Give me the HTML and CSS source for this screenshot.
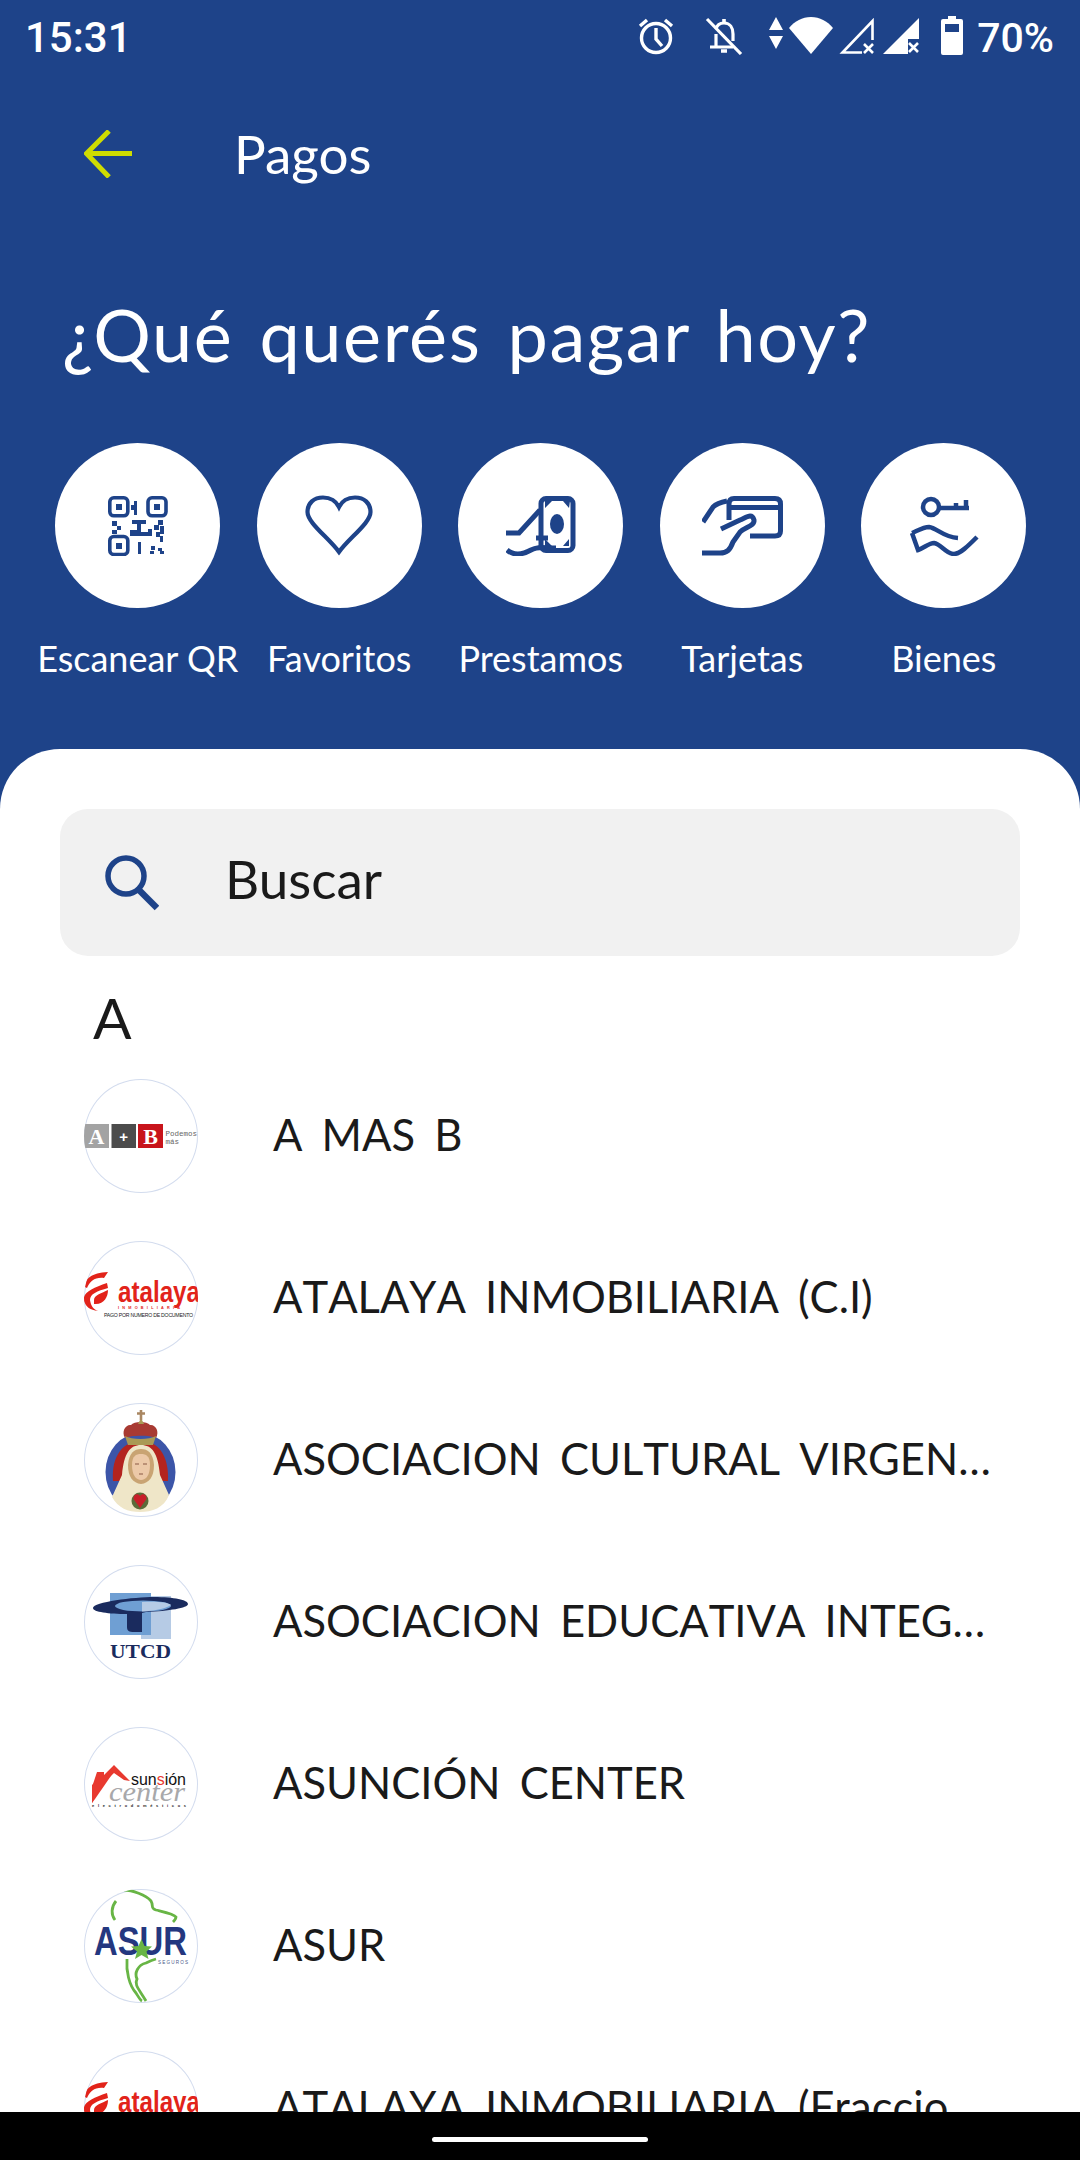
FILE: index.html
```html
<!DOCTYPE html>
<html lang="es">
<head>
<meta charset="utf-8">
<title>Pagos</title>
<link rel="stylesheet" href="styles.css">
</head>
<body>
<div class="screen">
  <main class="app">
    <section class="hero">
      <div class="status">
        <span class="clock">15:31</span>
        <div class="status-icons">
          <svg class="si" width="38" height="38" viewBox="0 0 38 38" fill="none" stroke="#fff" stroke-width="3.4"><circle cx="19" cy="21" r="14.5"/><path d="M19 11v11l6 7M3 9 10 3M35 9 28 3"/></svg>
          <svg class="si bell" width="38" height="38" viewBox="0 0 38 38" fill="none" stroke="#fff" stroke-width="3.2"><path d="M11 29V17M11 12c1-4 4-6 8-6 6 0 9 5 9 11v7M5 30h23"/><path d="M16 34h6M19 2v4" stroke-width="3.6"/><path d="M2 2 36 37"/></svg>
          <svg class="si arrows" width="14" height="32" viewBox="0 0 14 32" fill="#fff"><path d="M7 0 14 13H0zM7 32 0 19h14z"/></svg>
          <svg class="si wifi" width="46" height="37" viewBox="0 0 46 37" fill="#fff"><path d="M23 37 1 11C7 4 14 0 23 0s16 4 22 11z"/></svg>
          <svg class="si sig1" width="38" height="38" viewBox="0 0 38 38" fill="none" stroke="#fff" stroke-width="2.600"><path d="M24 35.500H4.500L34.500 4V23"/><path d="M26 27l9 9M35 27l-9 9"/></svg>
          <svg class="si sig2" width="38" height="38" viewBox="0 0 38 38"><path d="M37 1V22H26V37H1z" fill="#fff"/><path d="M27 26l9 9M36 26l-9 9" stroke="#fff" stroke-width="2.600"/></svg>
          <svg class="si batt" width="22" height="39" viewBox="0 0 22 39"><path d="M7 0h8v3h5q2 0 2 2v32q0 2-2 2H2q-2 0-2-2V5q0-2 2-2h5z" fill="#fff"/><rect x="4" y="8" width="14" height="8" fill="#1e4389"/></svg>
          <span class="pct">70%</span>
        </div>
      </div>
      <header class="toolbar">
        <svg class="back" width="48" height="48" viewBox="0 0 48 48" fill="none" stroke="#cfdc00" stroke-width="5"><path d="M48 23.500H4M25 1 2.500 23.500 25 47"/></svg>
        <h1 class="page-name">Pagos</h1>
      </header>
      <h2 class="question">¿Qué querés pagar hoy?</h2>
      <nav class="quick">
        <a class="quick-item">
          <span class="disc">
            <svg width="60" height="60" viewBox="0 0 60 60" fill="none" stroke="#1e4389" stroke-width="3.600">
              <rect x="1.800" y="1.800" width="18" height="18" rx="4"/><rect x="40" y="1.800" width="18" height="18" rx="4"/><rect x="1.800" y="40.500" width="18" height="18" rx="4"/>
              <g fill="#1e4389" stroke="none"><rect x="8" y="8" width="6" height="6"/><rect x="46" y="8" width="6" height="6"/><rect x="8" y="47" width="6" height="6"/>
              <path d="M26 5h3v14h-3zM23 9h3v5h-3zM4 25h5v5H4zM9 30h4v4H9zM4 34h5v4H4zM24 24h14v4h-5v8h7v-3h4v7H22v-6h7v-6h-5zM50 24h5v5h-5zM46 29h5v5h-5zM52 30h4v8h-4zM48 36h4v5h-4zM52 40h3v6h-3zM30 46h3v12h-3zM43 50h4v4h-4zM50 52h4v3h-4zM42 55h4v3h-4zM52 55h4v3h-4z"/></g>
            </svg>
          </span>
          <span class="quick-label">Escanear QR</span>
        </a>
        <a class="quick-item">
          <span class="disc">
            <svg width="68" height="61" viewBox="0 0 68 61" fill="none" stroke="#1e4389" stroke-width="4.200"><path d="M34 57 C24 43 2.500 28 2.500 17 C2.500 8 9 2.500 18 2.500 C25 2.500 31 6 34 12 C37 6 43 2.500 50 2.500 C59 2.500 65.500 8 65.500 17 C65.500 28 44 43 34 57Z"/></svg>
          </span>
          <span class="quick-label">Favoritos</span>
        </a>
        <a class="quick-item">
          <span class="disc">
            <svg class="money" width="70" height="60" viewBox="0 0 70 60" fill="none" stroke="#1e4389" stroke-width="5">
              <path d="M0 37H13L34 14"/><path d="M1 54C8 60 16 59 25 54C32 50 38 52 50 52"/><path d="M30 42H42"/>
              <rect x="35" y="2.500" width="32" height="52" rx="5"/>
              <ellipse cx="51" cy="28" rx="7" ry="10" fill="#1e4389" stroke="none"/>
              <path d="M39 5h7l-7 7zM64 5l-1 7-6-7zM39 50v-7l7 7zM63 50h-6l6-7z" fill="#1e4389" stroke="none"/>
            </svg>
          </span>
          <span class="quick-label">Prestamos</span>
        </a>
        <a class="quick-item">
          <span class="disc">
            <svg class="card" width="81" height="60" viewBox="0 0 81 60" fill="none" stroke="#1e4389" stroke-width="5">
              <path d="M27 24V8q0-5.500 5-5.500H73q5.500 0 5.500 5.500V35q0 5-5.500 5H48"/><path d="M27 11.500H78" stroke-width="5"/>
              <path d="M1 26 L11 11Q15 7 25 5"/><path d="M0 57H18C25 57 28 54 31 46L38 36C43 31 53 30 52 24C50 17 45 21 38 24L19 33"/>
            </svg>
          </span>
          <span class="quick-label">Tarjetas</span>
        </a>
        <a class="quick-item">
          <span class="disc">
            <svg class="keyhand" width="70" height="60" viewBox="0 0 70 60" fill="none" stroke="#1e4389" stroke-width="4.500">
              <ellipse cx="22" cy="11" rx="8" ry="8"/><path d="M30 12H60M57 4v8M47 7v5" />
              <path d="M3 37C8 35 14 31 20 31C28 32 34 41 49 42"/><path d="M3 37L9 54C15 52 20 47 25 47C32 48 37 58 45 58C51 58 59 50 68 41"/>
            </svg>
          </span>
          <span class="quick-label">Bienes</span>
        </a>
      </nav>
    </section>

    <section class="sheet">
      <div class="search">
        <svg class="search-icon" width="54" height="56" viewBox="0 0 54 56" fill="none" stroke="#1e4389" stroke-width="5.500"><circle cx="21" cy="21" r="18"/><path d="M33 34 52 53" stroke-width="6.500"/></svg>
        <span class="search-text">Buscar</span>
      </div>
      <h3 class="letter">A</h3>
      <ul class="list">
        <li class="row">
          <span class="logo">
            <svg viewBox="0 0 114 114" width="114" height="114">
              <rect x="0" y="45" width="25" height="24" fill="#a3a3a3"/><rect x="27.500" y="45" width="24.500" height="24" fill="#4c4c4c"/><rect x="54" y="45" width="25" height="24" fill="#c8141b"/>
              <text x="12.500" y="65" class="t-serif" font-size="22" fill="#fff" text-anchor="middle">A</text>
              <text x="39.700" y="63" class="t-sans-b" font-size="15" fill="#fff" text-anchor="middle">+</text>
              <text x="66.500" y="65" class="t-serif" font-size="22" fill="#fff" text-anchor="middle">B</text>
              <text x="81.500" y="57" class="t-mono" font-size="7.500" fill="#666">Podemos</text>
              <text x="81.500" y="65" class="t-mono" font-size="7.500" fill="#666">más</text>
            </svg>
          </span>
          <span class="name">A MAS B</span>
        </li>
        <li class="row">
          <span class="logo">
            <svg viewBox="0 0 114 114" width="114" height="114">
              <use href="#atalaya"/>
            </svg>
          </span>
          <span class="name">ATALAYA INMOBILIARIA (C.I)</span>
        </li>
        <li class="row">
          <span class="logo">
            <svg viewBox="0 0 114 114" width="114" height="114">
              <ellipse cx="56.500" cy="69" rx="35" ry="39" fill="#3c55a8"/>
              <path d="M29 78C27 52 40 38 57 38S85 52 84 78z" fill="#b3241f"/>
              <path d="M28 94C34 105 44 109 56 109S80 105 85 92L76 72C74 50 68 42 57 42S40 50 38 72z" fill="#efe6c8"/>
              <path d="M44 62C45 50 50 46 57 46S69 50 70 62C70 74 65 80 57 81C49 80 44 74 44 62z" fill="#c9a473"/>
              <path d="M48 62C48 53 52 51 57 51S66 53 66 62C66 72 62 77 57 77S48 72 48 62z" fill="#ecc9a8"/>
              <path d="M51 61h4M59 61h4M55 71h4" stroke="#8a5a45" stroke-width="1.200"/>
              <circle cx="56" cy="98" r="8.500" fill="#5c6b3a"/><path d="M56 105 49.500 96C49 91 54 90 56 93 58 90 63 91 62.500 96z" fill="#c81f2a"/>
              <path d="M41 35C37 28 42 21 47 22C50 18 63 18 66 22C71 21 76 28 72 35C66 32 47 32 41 35z" fill="#a83a32"/>
              <path d="M41 33C48 37 65 37 72 33L69 42H44z" fill="#a99a55"/>
              <path d="M54 21 57 15 60 21z" fill="#a99a55"/>
              <path d="M57 7V17M53 10.500H61" stroke="#a98762" stroke-width="2.600"/>
            </svg>
          </span>
          <span class="name">ASOCIACION CULTURAL VIRGEN…</span>
        </li>
        <li class="row">
          <span class="logo">
            <svg viewBox="0 0 114 114" width="114" height="114">
              <rect x="57" y="31" width="30" height="43" fill="#b6cbe5"/>
              <rect x="26" y="28" width="41" height="42" fill="#6f9fd3"/>
              <path d="M9 43C9 37 50 32 70 32C90 32 104 35 104 39C104 43 85 46 62 47L58 48V67H50C45 67 43 66 43 62V49C25 49 9 47 9 43z" fill="#1a2b5e"/>
              <ellipse cx="59" cy="41" rx="28" ry="5.500" fill="#6f9fd3"/>
              <path d="M58 46.500C70 46 80 44 87 40C85 37 70 36 58 37z" fill="#b6cbe5"/>
              <text x="56.500" y="93" class="t-serif-b" font-size="19" fill="#1a2b5e" text-anchor="middle" textLength="61" lengthAdjust="spacingAndGlyphs">UTCD</text>
            </svg>
          </span>
          <span class="name">ASOCIACION EDUCATIVA INTEG…</span>
        </li>
        <li class="row">
          <span class="logo">
            <svg viewBox="0 0 114 114" width="114" height="114">
              <path d="M8 76 8 60 13 45H20V48L30 38 46 54 40 53 30 46 17 58z" fill="#e8392f"/>
              <path d="M8 76V58L17 50 29 46 11 72z" fill="#e8392f"/>
              <text x="47" y="58" class="t-sans" font-size="16" fill="#111" textLength="55" lengthAdjust="spacingAndGlyphs">sun<tspan fill="#e8392f">s</tspan>ión</text>
              <text x="25" y="74" class="t-serif-i" font-size="27" fill="#a8a8aa" textLength="76" lengthAdjust="spacingAndGlyphs">center</text>
              <text x="8" y="80" class="t-sans-b" font-size="4" fill="#222" textLength="94">electrodomésticos</text>
            </svg>
          </span>
          <span class="name">ASUNCIÓN CENTER</span>
        </li>
        <li class="row">
          <span class="logo">
            <svg viewBox="0 0 114 114" width="114" height="114">
              <g fill="none" stroke="#68b545" stroke-width="2.800">
                <path d="M40 1C48 1 62 6 67 12C70 17 66 19 72 21C80 23 90 25 92 28C92 30 90 32 89 33"/>
                <path d="M32 12C27 18 27 26 31 31"/>
                <path d="M43 70C42 82 45 96 52 104C54 107 56 111 58 112"/>
                <path d="M62 112C55 100 50 96 53 90C50 84 54 76 62 74C66 72 68 71 72 70"/>
              </g>
              <text x="56.500" y="66" class="t-sans-b" font-size="40" fill="#24377f" text-anchor="middle" textLength="93" lengthAdjust="spacingAndGlyphs">ASUR</text>
              <path d="M57.500 50 60.500 57 68 57.500 62.500 62.500 64.500 70 57.500 66 51 70 53 62.500 47 57.500 54.500 57z" fill="#68b545"/>
              <text x="74" y="74.500" class="t-sans" font-size="4.600" fill="#4a5a8a" textLength="30">SEGUROS</text>
            </svg>
          </span>
          <span class="name">ASUR</span>
        </li>
        <li class="row">
          <span class="logo">
            <svg viewBox="0 0 114 114" width="114" height="114">
              <use href="#atalaya"/>
            </svg>
          </span>
          <span class="name">ATALAYA INMOBILIARIA (Fraccio…</span>
        </li>
      </ul>
    </section>
  </main>
  <footer class="navbar"><span class="handle"></span></footer>
</div>
<svg class="defs" width="0" height="0" aria-hidden="true">
  <defs>
    <g id="atalaya">
      <path d="M1 46C0 39 6 32 24 31L20 37C11 36 6 40 3 47zM0 60C-2 52 8 47 23 42L24 47C13 50 6 53 6 59C7 65 9 68 14 70C6 69 2 66 0 60zM10 59C10 54 18 52 24 49C24 56 20 64 10 63z" fill="#e2231a"/>
      <text x="34" y="61" class="t-sans-b" font-size="30" fill="#e2231a" textLength="82" lengthAdjust="spacingAndGlyphs">atalaya</text>
      <text x="34" y="67.500" class="t-sans-b" font-size="3.800" fill="#e2231a" textLength="62">INMOBILIARIA</text>
      <text x="20" y="76" class="t-sans" font-size="5.200" fill="#222" textLength="89">PAGO POR NUMERO DE DOCUMENTO</text>
    </g>
  </defs>
</svg>
</body>
</html>
```
FILE: styles.css
```css
* { box-sizing: border-box; margin: 0; padding: 0; }
html, body { width: 1080px; height: 2160px; overflow: hidden; background: #000; }
body { font-family: "Lato", "Noto Sans", sans-serif; }
.defs { position: absolute; }
.screen { width: 1080px; height: 2160px; display: flex; flex-direction: column; }
.app { height: 2112px; flex: none; overflow: hidden; background: #1e4389; display: flex; flex-direction: column; }
.navbar { height: 48px; flex: none; background: #000; display: flex; justify-content: center; padding-top: 25px; }
.handle { width: 216px; height: 5px; border-radius: 3px; background: #fff; }

.hero { height: 749px; flex: none; color: #fff; display: flex; flex-direction: column; }
.status { height: 74px; padding: 15px 26px 0 25px; display: flex; justify-content: space-between; align-items: flex-start; font-family: "Roboto", sans-serif; font-weight: 500; font-size: 41px; line-height: 46px; flex: none; }
.clock { font-size: 42px; }
.status-icons { display: flex; align-items: flex-start; }
.si { display: block; flex: none; margin-top: 2px; }
.bell { margin-left: 30px; }
.arrows { margin-left: 26px; }
.wifi { margin-left: 5px; }
.sig1 { margin-left: 4px; }
.sig2 { margin-left: 6px; }
.batt { margin-left: 21px; margin-top: 1px; }
.pct { margin-left: 14px; margin-right: 0; }

.toolbar { height: 66px; display: flex; align-items: center; padding: 0 0 0 84px; margin-top: 47px; flex: none; }
.back { flex: none; }
.page-name { margin-left: 102px; font-size: 53px; font-weight: 400; line-height: 66px; }
.question { margin: 104px 0 0 62px; font-size: 72px; font-weight: 400; line-height: 86px; letter-spacing: 1.6px; word-spacing: 6px; white-space: nowrap; }
.quick { display: grid; grid-template-columns: repeat(5, 201.500px); justify-content: start; margin: 66px 0 0 37px; }
.quick-item { display: flex; flex-direction: column; align-items: center; }
.disc { width: 165px; height: 165px; border-radius: 50%; background: #fff; display: flex; align-items: center; justify-content: center; flex: none; }
.quick-label { margin-top: 27px; font-size: 36px; line-height: 46px; white-space: nowrap; }

.sheet { flex: 1; background: #fff; border-radius: 60px 60px 0 0; padding: 60px 60px 0; min-height: 0; }
.search { height: 147px; background: #f1f1f1; border-radius: 28px; display: flex; align-items: center; padding-left: 45px; }
.search-icon { flex: none; margin-top: 0; }
.search-text { margin: -8px 0 0 66px; font-size: 53px; color: #1a1a1a; }
.letter { margin: 27px 0 0 33px; font-size: 57px; font-weight: 400; line-height: 68px; color: #1a1a1a; }
.list { list-style: none; margin: 0 0 0 24px; padding-top: 28px; }
.row { height: 114px; display: flex; align-items: center; margin-bottom: 48px; }
.logo { width: 114px; height: 114px; border-radius: 50%; overflow: hidden; flex: none; position: relative; background: #fff; box-shadow: inset 0 0 0 1px #d3dcee; }
.logo svg { display: block; }
.name { margin: -4px 0 0 75px; font-size: 43.500px; color: #1a1a1a; white-space: nowrap; word-spacing: 8px; font-kerning: none; }

.t-serif { font-family: "Liberation Serif", serif; font-weight: 700; }
.t-serif-b { font-family: "Liberation Serif", serif; font-weight: 700; }
.t-serif-i { font-family: "Liberation Serif", serif; font-style: italic; }
.t-sans { font-family: "Liberation Sans", sans-serif; }
.t-sans-b { font-family: "Liberation Sans", sans-serif; font-weight: 700; }
.t-mono { font-family: "Liberation Mono", monospace; }
```
